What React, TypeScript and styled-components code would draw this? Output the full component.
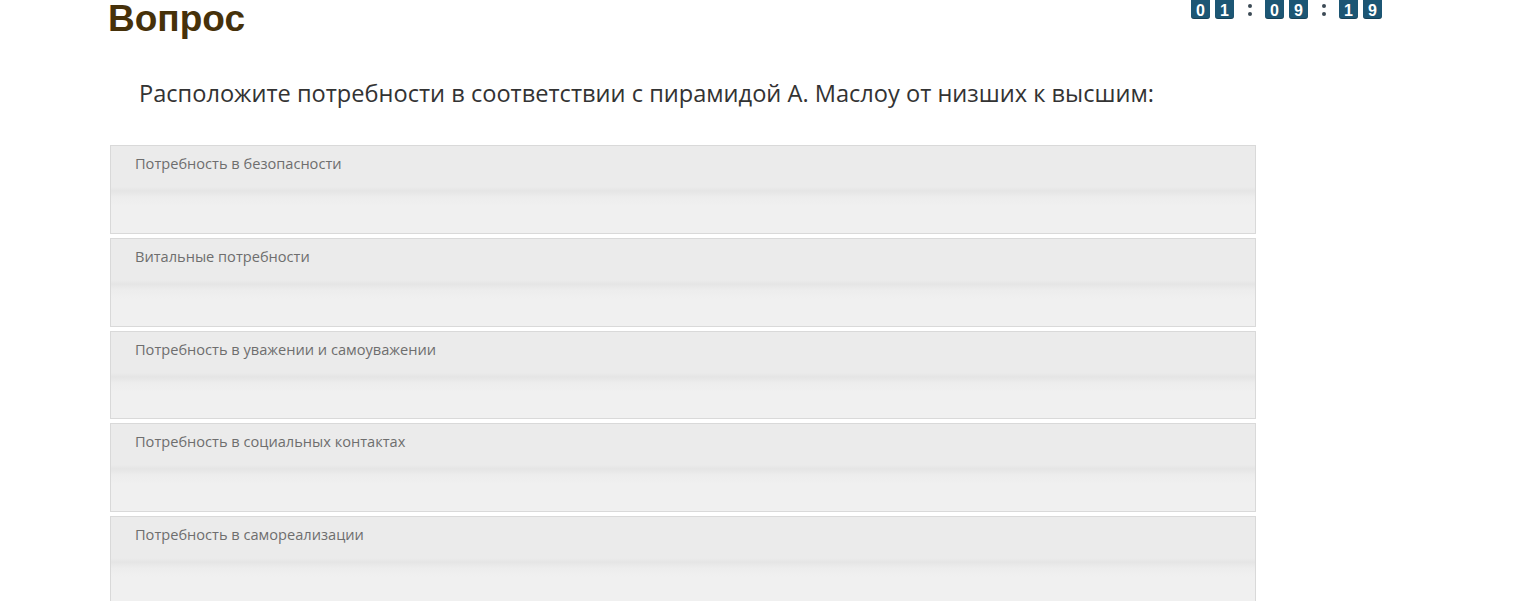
import React from "react";
import styled, { createGlobalStyle } from "styled-components";

const GlobalStyle = createGlobalStyle`
  html, body {
    margin: 0;
    padding: 0;
    background: #ffffff;
  }
  body {
    font-family: "Open Sans", "Liberation Sans", sans-serif;
  }
`;

const Page = styled.div`
  width: 1516px;
  height: 601px;
  overflow: hidden;
  padding: 0 0 0 108px;
  box-sizing: border-box;
`;

const Header = styled.div`
  width: 1274px;
  display: flex;
  justify-content: space-between;
  align-items: flex-start;
`;

const Title = styled.h1`
  margin: 0;
  font-family: "Liberation Sans", Arial, sans-serif;
  font-weight: 700;
  font-size: 37px;
  line-height: 37px;
  color: #46310a;
`;

const Timer = styled.div`
  display: flex;
  align-items: center;
  margin-top: -5px;
`;

const Pair = styled.div`
  display: flex;
  gap: 5px;
`;

const Digit = styled.span`
  width: 19px;
  height: 24px;
  border-radius: 3px;
  background: #1c5674;
  color: #ffffff;
  font-family: "Liberation Sans", Arial, sans-serif;
  font-weight: 700;
  font-size: 16px;
  line-height: 24px;
  text-align: center;
  padding-top: 4px;
  box-sizing: border-box;
  box-shadow: inset 0 -1px 0 rgba(0, 0, 0, 0.25);
`;

const Colon = styled.span`
  width: 31px;
  display: flex;
  flex-direction: column;
  align-items: center;
  gap: 4px;
  padding-top: 5px;

  &::before,
  &::after {
    content: "";
    width: 4px;
    height: 4px;
    border-radius: 50%;
    background: #3c4a55;
  }
`;

const Question = styled.p`
  margin: 40px 0 0 31px;
  font-size: 23.6px;
  line-height: 32px;
  color: #333333;
`;

const List = styled.div`
  margin: 36px 0 0 2px;
  width: 1146px;
  display: flex;
  flex-direction: column;
  gap: 4px;
`;

const Item = styled.div`
  height: 88.75px;
  box-sizing: border-box;
  border: 1px solid #d9d9d9;
  background: linear-gradient(
    to bottom,
    #ebebeb 0,
    #ebebeb 41px,
    #e5e5e5 45px,
    #ededed 51px,
    #f0f0f0 60px,
    #f0f0f0 100%
  );
  display: flex;
  flex-direction: column;
`;

const ItemLabel = styled.div`
  padding: 7px 24px 0;
  font-size: 14.6px;
  line-height: 20px;
  color: #6e6e6e;
`;

const needs = [
  "Потребность в безопасности",
  "Витальные потребности",
  "Потребность в уважении и самоуважении",
  "Потребность в социальных контактах",
  "Потребность в самореализации",
];

const time = ["01", "09", "19"];

export default function App() {
  return (
    <>
      <GlobalStyle />
      <Page>
        <Header>
          <Title>Вопрос</Title>
          <Timer>
            {time.map((pair, i) => (
              <React.Fragment key={i}>
                {i > 0 && <Colon />}
                <Pair>
                  {pair.split("").map((d, j) => (
                    <Digit key={j}>{d}</Digit>
                  ))}
                </Pair>
              </React.Fragment>
            ))}
          </Timer>
        </Header>
        <Question>
          Расположите потребности в соответствии с пирамидой А. Маслоу от низших к высшим:
        </Question>
        <List>
          {needs.map((n) => (
            <Item key={n}>
              <ItemLabel>{n}</ItemLabel>
            </Item>
          ))}
        </List>
      </Page>
    </>
  );
}
